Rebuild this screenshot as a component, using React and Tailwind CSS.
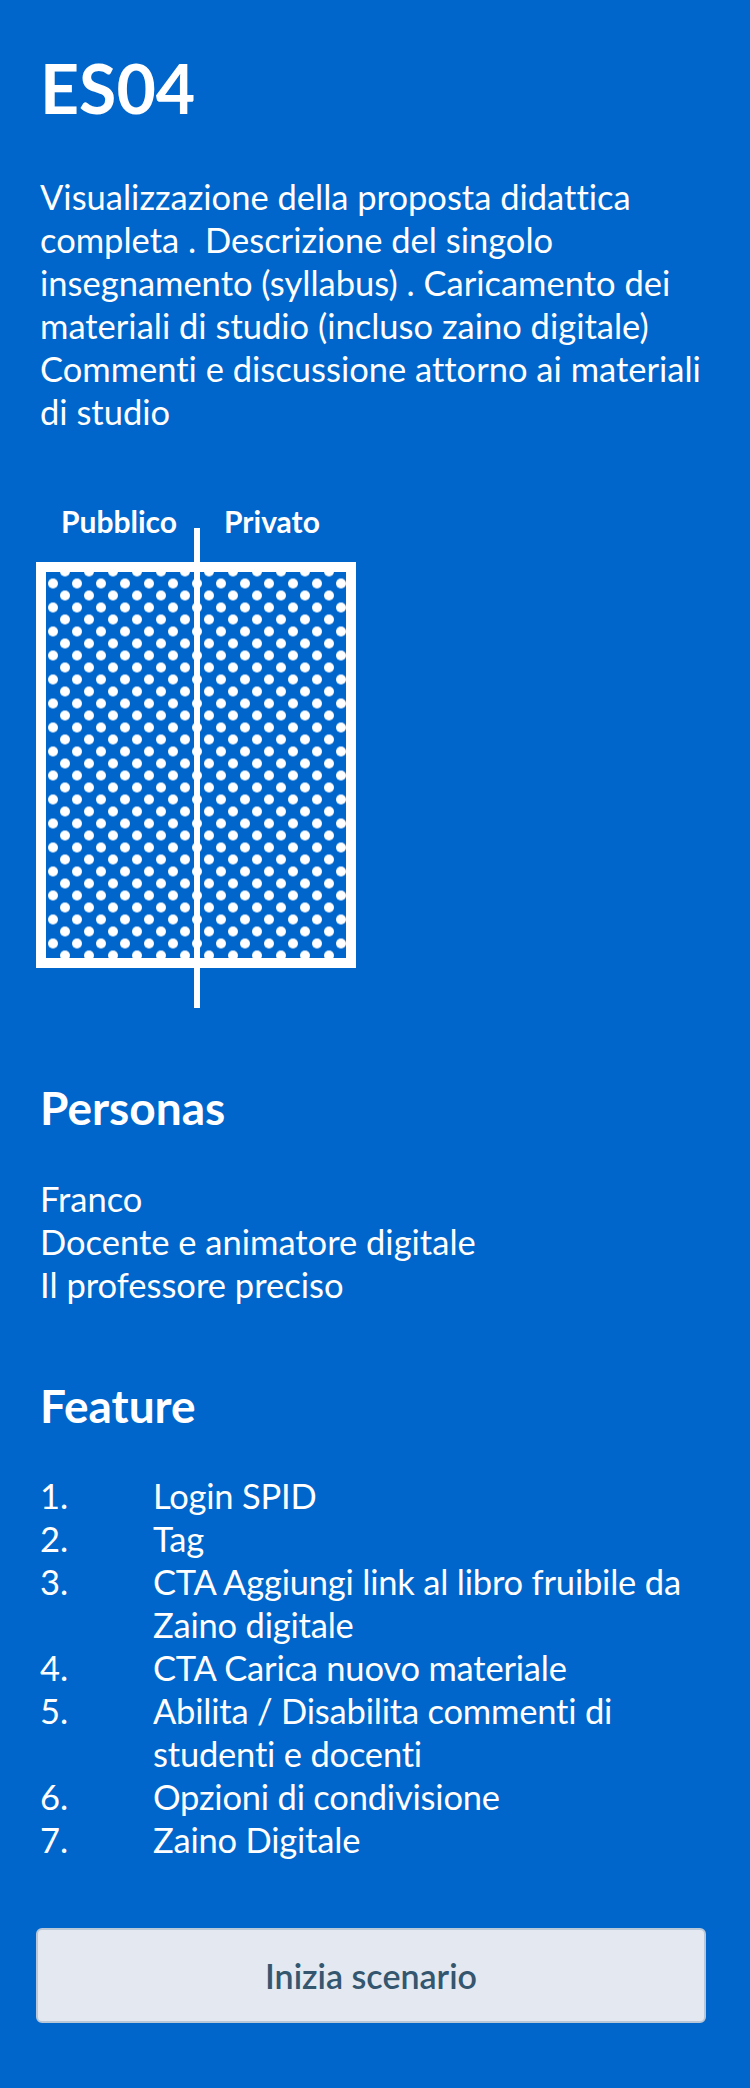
// ES04 — scenario detail card

const description = [
  'Visualizzazione della proposta didattica',
  'completa . Descrizione del singolo',
  'insegnamento (syllabus) . Caricamento dei',
  'materiali di studio (incluso zaino digitale)',
  'Commenti e discussione attorno ai materiali',
  'di studio',
]

const personas = ['Franco', 'Docente e animatore digitale', 'Il professore preciso']

const features = [
  ['Login SPID'],
  ['Tag'],
  ['CTA Aggiungi link al libro fruibile da', 'Zaino digitale'],
  ['CTA Carica nuovo materiale'],
  ['Abilita / Disabilita commenti di', 'studenti e docenti'],
  ['Opzioni di condivisione'],
  ['Zaino Digitale'],
]

function Diagram() {
  return (
    <div className="relative -ml-1 mt-[70px] w-[320px] h-[505px]">
      <svg width="320" height="505" viewBox="0 0 320 505" className="block">
        <defs>
          <pattern id="dots" x="5" y="68.5" width="24" height="24" patternUnits="userSpaceOnUse">
            <circle cx="0" cy="0" r="5" fill="#fff" />
            <circle cx="24" cy="0" r="5" fill="#fff" />
            <circle cx="0" cy="24" r="5" fill="#fff" />
            <circle cx="24" cy="24" r="5" fill="#fff" />
            <circle cx="12" cy="12" r="5" fill="#fff" />
          </pattern>
        </defs>
        <rect x="10" y="69" width="300" height="386" fill="url(#dots)" />
        <rect x="5" y="64" width="310" height="396" fill="none" stroke="#fff" strokeWidth="10" />
        <rect x="158" y="25" width="6" height="480" fill="#fff" />
      </svg>
      {/* labels */}
      <span className="absolute top-0 right-[179px] text-[30px] leading-[36px] font-bold">Pubblico</span>
      <span className="absolute top-0 left-[188px] text-[30px] leading-[36px] font-bold">Privato</span>
    </div>
  )
}

export default function App() {
  return (
    <div
      className="min-h-[2088px] bg-[#0066cc] text-white pl-10 pr-10 pt-12 pb-[65px] [font-variant-ligatures:no-common-ligatures]"
      style={{ fontFamily: 'Lato, "Open Sans", sans-serif' }}
    >
      <h1 className="text-[68px] leading-[80px] font-bold">ES04</h1>

      {/* Description */}
      <p className="mt-[47px] text-[34.5px] leading-[43px] whitespace-nowrap">
        {description.map((line, i) => (
          <span key={i} className="block">{line}</span>
        ))}
      </p>

      <Diagram />

      {/* Personas */}
      <h2 className="mt-[72px] text-[46px] leading-[56px] font-bold">Personas</h2>
      <div className="mt-[41px] text-[34.5px] leading-[43px]">
        {personas.map((p) => (
          <p key={p}>{p}</p>
        ))}
      </div>

      {/* Feature */}
      <h2 className="mt-[72px] text-[46px] leading-[56px] font-bold">Feature</h2>
      <ol className="mt-[40px] text-[34.5px] leading-[43px]">
        {features.map((lines, i) => (
          <li key={i} className="flex">
            <span className="w-[113px] shrink-0">{i + 1}.</span>
            <span className="whitespace-nowrap tracking-[-0.2px]">
              {lines.map((l) => (
                <span key={l} className="block">{l}</span>
              ))}
            </span>
          </li>
        ))}
      </ol>

      <button className="mt-[67px] -ml-1 w-[670px] h-[95px] flex items-center justify-center rounded-[6px] border-2 border-[#b9c8d8] bg-[#e4e9f1] text-[#35566f] text-[34px] font-semibold">
        Inizia scenario
      </button>
    </div>
  )
}
